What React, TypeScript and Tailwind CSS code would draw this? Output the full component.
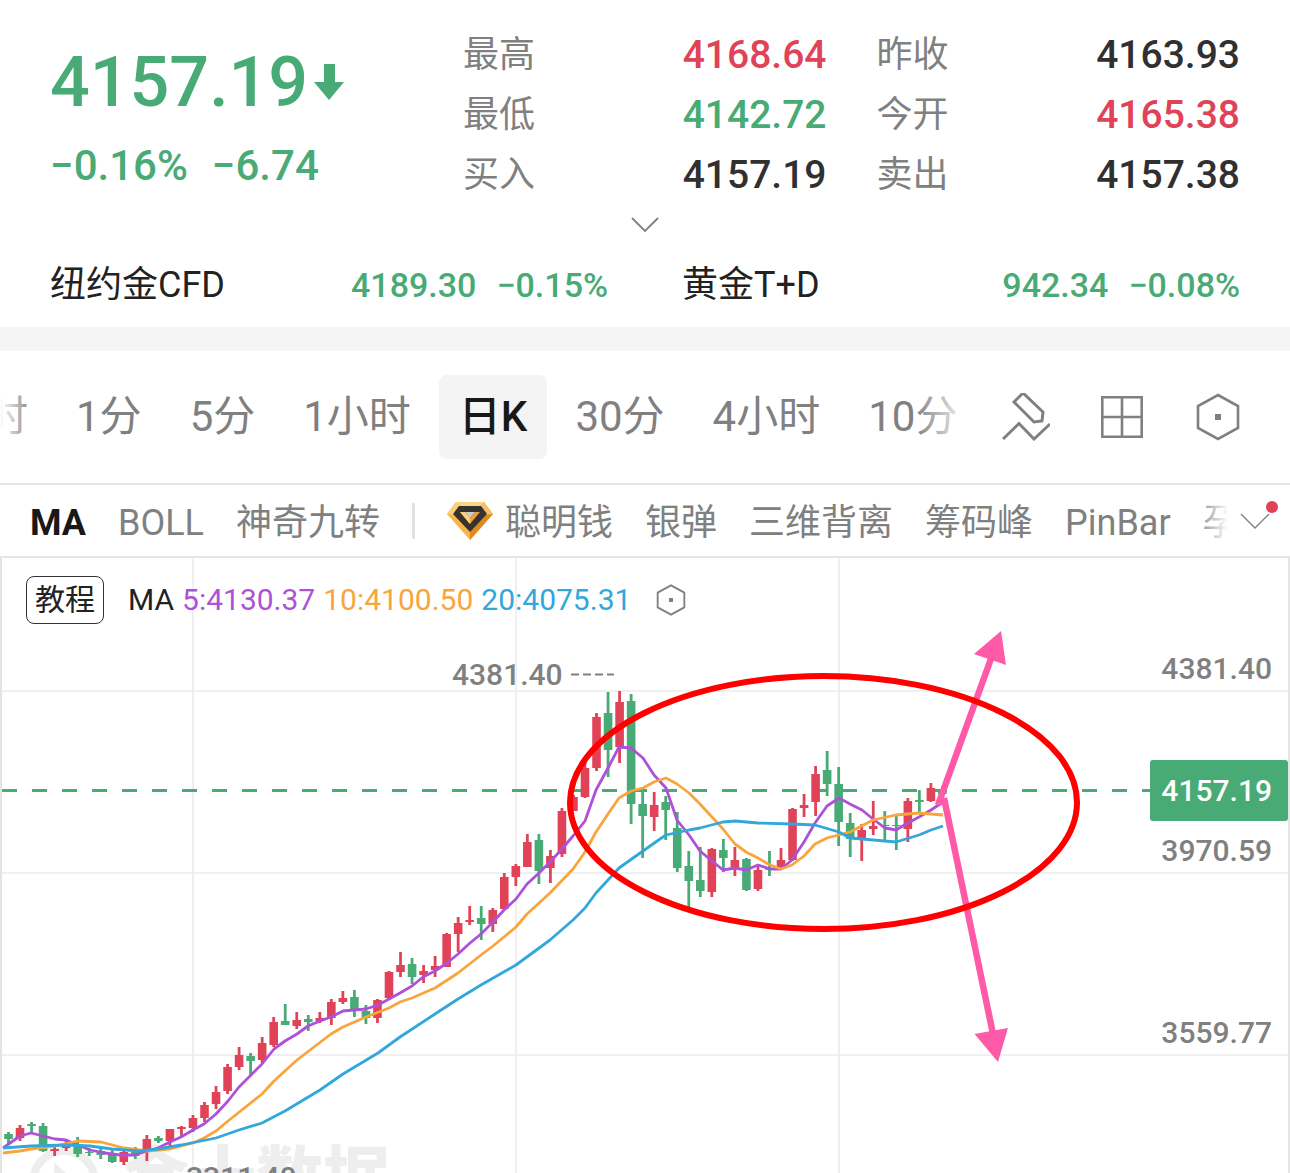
import React, { useState } from "react";
import clsx from "clsx";

type Candle = [color: "r" | "g", high: number, top: number, bottom: number, low: number];

const stats = [
  { label: "最高", value: "4168.64", color: "text-[#e04358]" },
  { label: "昨收", value: "4163.93", color: "text-[#303030]" },
  { label: "最低", value: "4142.72", color: "text-[#48aa74]" },
  { label: "今开", value: "4165.38", color: "text-[#e04358]" },
  { label: "买入", value: "4157.19", color: "text-[#303030]" },
  { label: "卖出", value: "4157.38", color: "text-[#303030]" },
];

const tickers = [
  { name: "纽约金CFD", price: "4189.30", change: "−0.15%" },
  { name: "黄金T+D", price: "942.34", change: "−0.08%" },
];

const periods = ["分时", "1分", "5分", "1小时", "日K", "30分", "4小时", "10分"];

const mainIndicators = ["MA", "BOLL", "神奇九转"];
const proIndicators = ["聪明钱", "银弹", "三维背离", "筹码峰", "PinBar", "孕线"];

const legend = [
  { text: "5:4130.37", color: "text-[#ae50d8]" },
  { text: "10:4100.50", color: "text-[#f9a53c]" },
  { text: "20:4075.31", color: "text-[#31a7dc]" },
];

const priceLabels = [
  { y: 679, text: "4381.40" },
  { y: 861, text: "3970.59" },
  { y: 1043, text: "3559.77" },
];

const candles: Candle[] = [
  ["g", 1132, 1134, 1139, 1144], ["r", 1125, 1128, 1138, 1141], ["g", 1122, 1124, 1126, 1132],
  ["g", 1123, 1126, 1151, 1152], ["r", 1147, 1149, 1151, 1156], ["r", 1141, 1145, 1148, 1151],
  ["g", 1137, 1144, 1154, 1157], ["g", 1148, 1152, 1153, 1156], ["g", 1147, 1151, 1155, 1159],
  ["g", 1150, 1155, 1162, 1163], ["r", 1151, 1152, 1162, 1165], ["g", 1147, 1152, 1156, 1159],
  ["r", 1135, 1139, 1149, 1161], ["g", 1136, 1138, 1141, 1143], ["r", 1129, 1129, 1141, 1146],
  ["r", 1126, 1127, 1129, 1136], ["r", 1115, 1118, 1128, 1132], ["r", 1102, 1105, 1118, 1122],
  ["r", 1086, 1092, 1104, 1109], ["r", 1064, 1067, 1091, 1094], ["r", 1047, 1055, 1067, 1070],
  ["g", 1053, 1056, 1061, 1075], ["r", 1037, 1043, 1060, 1063], ["r", 1017, 1022, 1045, 1047],
  ["g", 1004, 1021, 1025, 1025], ["r", 1012, 1020, 1026, 1029], ["g", 1015, 1019, 1022, 1031],
  ["r", 1012, 1018, 1021, 1023], ["r", 999, 1002, 1018, 1025], ["r", 991, 998, 1002, 1004],
  ["g", 990, 997, 1010, 1017], ["g", 1005, 1011, 1018, 1024], ["r", 999, 1000, 1018, 1023],
  ["r", 971, 972, 998, 1000], ["r", 952, 965, 972, 977], ["g", 958, 964, 977, 984],
  ["r", 965, 971, 975, 983], ["r", 956, 966, 970, 977], ["r", 933, 934, 967, 967],
  ["r", 917, 923, 934, 952], ["r", 906, 920, 922, 925], ["g", 906, 918, 924, 940],
  ["r", 908, 910, 924, 932], ["r", 873, 877, 909, 910], ["r", 864, 866, 877, 886],
  ["r", 834, 842, 867, 867], ["g", 834, 840, 871, 884], ["r", 850, 856, 868, 883],
  ["r", 808, 811, 854, 857], ["r", 795, 797, 811, 811], ["r", 760, 768, 797, 798],
  ["r", 713, 717, 768, 771], ["g", 692, 713, 750, 777], ["r", 691, 702, 747, 763],
  ["g", 694, 701, 804, 824], ["g", 792, 804, 816, 858], ["r", 792, 805, 817, 831],
  ["g", 796, 802, 810, 840], ["g", 812, 828, 868, 872], ["g", 851, 866, 881, 907],
  ["g", 847, 880, 891, 897], ["r", 848, 849, 892, 897], ["g", 839, 850, 858, 872],
  ["r", 847, 860, 868, 876], ["g", 858, 859, 890, 891], ["r", 866, 870, 889, 891],
  ["g", 851, 869, 870, 876], ["r", 848, 860, 868, 870], ["r", 808, 809, 860, 861],
  ["r", 794, 805, 808, 817], ["r", 766, 774, 802, 816], ["g", 751, 770, 784, 796],
  ["g", 767, 784, 822, 846], ["g", 813, 823, 839, 857], ["r", 824, 830, 838, 861],
  ["r", 801, 826, 829, 835], ["g", 811, 825, 826, 840], ["g", 816, 825, 826, 850],
  ["r", 798, 801, 829, 842], ["g", 790, 800, 802, 812], ["r", 783, 788, 801, 802],
  ["g", 786, 791, 794, 798],
];

const candleColors = { r: "#e04358", g: "#48aa74" };

const averages = [
  {
    color: "#ae50d8",
    points: "3,1148 20,1136 31,1133 55,1139 66,1140 78,1145 90,1150 105,1153 120,1155 135,1155 147,1151 158,1148 170,1142 181,1137 193,1130 204,1124 216,1114 228,1101 239,1087 251,1075 262,1064 274,1049 285,1041 297,1034 308,1026 320,1021 331,1017 343,1011 354,1010 366,1009 378,1005 389,999 400,993 412,986 423,977 435,971 447,963 458,954 470,943 481,934 493,922 504,910 516,899 527,884 539,873 550,862 562,849 573,836 585,821 596,790 608,768 619,747 631,748 643,758 654,775 666,788 677,820 689,835 700,851 712,861 723,870 735,868 746,870 758,865 770,869 781,869 792,860 804,842 815,823 827,806 839,798 850,804 862,810 873,819 885,828 896,830 908,823 919,817 931,810 943,802",
  },
  {
    color: "#f9a53c",
    points: "3,1153 20,1151 31,1149 55,1146 78,1141 101,1142 124,1148 147,1151 170,1149 193,1143 204,1138 216,1131 228,1121 262,1094 274,1081 297,1060 331,1034 343,1027 366,1017 389,1008 400,1002 412,998 435,988 458,973 481,955 493,946 516,927 527,914 550,893 573,869 585,852 596,832 608,814 619,798 631,791 643,788 654,782 666,778 677,784 689,793 700,804 723,829 735,844 746,852 758,858 770,865 781,869 792,865 804,856 815,844 827,838 850,832 873,820 896,815 919,813 943,815",
  },
  {
    color: "#31a7dc",
    points: "3,1148 31,1146 66,1145 90,1146 112,1149 140,1151 158,1149 181,1145 216,1138 239,1130 262,1123 285,1111 320,1090 343,1074 378,1053 400,1037 435,1014 458,999 481,985 516,965 550,940 573,920 585,908 596,893 608,880 619,868 660,839 666,835 689,830 700,828 723,822 735,821 758,823 792,824 815,825 839,832 850,838 862,839 896,842 919,835 931,830 943,826",
  },
];

const HexagonIcon: React.FC<{ className: string; strokeWidth: number }> = ({ className, strokeWidth }) => (
  <svg viewBox="0 0 48 48" className={className} fill="none" stroke="#808080" strokeWidth={strokeWidth}>
    <path d="M24 2 44 13V35L24 46 4 35V13Z" />
    <rect x="21" y="21" width="6" height="6" fill="#808080" stroke="none" />
  </svg>
);

const DrawIcon = () => (
  <svg viewBox="0 0 48 48" className="size-12" fill="none" stroke="#808080" strokeWidth="3">
    <path d="M21 0 12 9 32 29 40 28 41 19Z" />
    <path d="M1 46 17 30.500 32 46 48 31" />
  </svg>
);

const GridIcon = () => (
  <svg viewBox="0 0 48 48" className="size-12" fill="none" stroke="#808080" strokeWidth="2.6">
    <path d="M4.300 4.300H43.700V43.700H4.300ZM24 4V44M4 24H44" />
  </svg>
);

const DiamondIcon = () => (
  <svg viewBox="0 0 46 40" className="w-[46px] h-10 shrink-0">
    <path d="M9 1H37L46 13 23 39 0 13Z" fill="#f6b64a" />
    <path d="M9 1H37L33 5H13Z" fill="#fbd583" />
    <path d="M37 1 46 13 39 14 33 5Z" fill="#f4c068" />
    <path d="M46 13 23 39V30L39 14Z" fill="#e08a1c" />
    <path d="M9 1 0 13 7 14 13 5Z" fill="#fbd07a" />
    <path d="M12 5H34L40 13 23 31 6 13Z" fill="#36322f" />
    <path d="M13 11H18L23 17 28 11H33L23 23Z" fill="#f0a02c" />
    <path d="M13 11H18L23 17V23Z" fill="#fcd27b" />
    <path d="M18 11H28L23 17Z" fill="#c9cbd0" />
  </svg>
);

const QuoteHeader = () => (
  <header className="pt-[25px] px-[50px]">
    <div className="grid grid-cols-[413px_1fr]">
      <div className="text-[#48aa74] font-medium">
        <div className="flex items-center h-[114px]">
          <span className="text-[70px] leading-none">4157.19</span>
          <svg viewBox="0 0 30 36" className="ml-1.5 w-[30px] h-9" fill="#48aa74">
            <path d="M10 0H21V18H30L15 36 0 18H10Z" />
          </svg>
        </div>
        <div className="flex gap-6 text-[42px] leading-[54px]">
          <span>−0.16%</span>
          <span>−6.74</span>
        </div>
      </div>

      <dl className="grid grid-cols-2 gap-x-[50px]">
        {
          stats.map(({ label, value, color }) => (
            <div key={label} className="flex justify-between h-[60px] leading-[60px]">
              <dt className="text-4xl leading-[60px] text-[#808080]">{label}</dt>
              <dd className={clsx("text-[39px] font-medium", color)}>{value}</dd>
            </div>
          ))
        }
      </dl>
    </div>

    <button type="button" aria-label="展开行情" className="flex items-center justify-center mx-auto h-10 px-4">
      <svg viewBox="0 0 28 16" className="w-7 h-4" fill="none" stroke="#808080" strokeWidth="1.8">
        <path d="M1 1 14 14 27 1" />
      </svg>
    </button>

    <div className="grid grid-cols-2 gap-x-[74px] h-[82px] leading-[80px]">
      {
        tickers.map(({ name, price, change }) => (
          <a key={name} href="#" className="flex justify-between">
            <span className="text-4xl leading-[80px] text-[#222]">{name}</span>
            <span className="flex gap-5 text-[34px] font-medium text-[#48aa74]">
              <span>{price}</span>
              <span>{change}</span>
            </span>
          </a>
        ))
      }
    </div>
  </header>
);

const PeriodBar = () => {
  const [activePeriod, setActivePeriod] = useState("日K");

  return (
    <div className="flex items-center h-[134px] pr-12 border-b-2 border-[#e6e6e6]">
      <div className="relative flex-1 min-w-0 overflow-hidden">
        <nav className="flex gap-2 -ml-[76px]">
          {
            periods.map(period => (
              <button
                key={period}
                type="button"
                onClick={() => setActivePeriod(period)}
                className={clsx(
                  "shrink-0 h-[84px] px-5 rounded-lg text-[42px] leading-none whitespace-nowrap",
                  period === activePeriod ? "bg-[#f4f4f4] font-medium text-[#181818]" : "text-[#808080]"
                )}
              >
                {period}
              </button>
            ))
          }
        </nav>
        <div className="absolute inset-y-0 left-0 w-8 bg-linear-to-r from-white to-transparent pointer-events-none" />
        <div className="absolute inset-y-0 right-0 w-14 bg-linear-to-l from-white to-transparent pointer-events-none" />
      </div>

      <div className="flex gap-12 pl-8">
        <button type="button" aria-label="画线"><DrawIcon /></button>
        <button type="button" aria-label="多图"><GridIcon /></button>
        <button type="button" aria-label="设置"><HexagonIcon className="size-12" strokeWidth={2.6} /></button>
      </div>
    </div>
  );
};

const IndicatorBar = () => {
  const [activeIndicator, setActiveIndicator] = useState("MA");

  const renderTab = (name: string) => (
    <button
      key={name}
      type="button"
      onClick={() => setActiveIndicator(name)}
      className={clsx(
        "shrink-0 pt-1 text-4xl whitespace-nowrap",
        name === activeIndicator ? "font-bold text-[#181818]" : "text-[#808080]"
      )}
    >
      {name}
    </button>
  );

  return (
    <div className="flex items-center h-[73px] pl-[30px] pr-5 border-b-2 border-[#e6e6e6]">
      <div className="relative flex-1 min-w-0 overflow-hidden">
        <nav className="flex items-center gap-8">
          {mainIndicators.map(renderTab)}
          <span className="w-[3px] h-9 shrink-0 bg-[#e2e2e2]" />
          <span className="flex items-center gap-3 shrink-0">
            <DiamondIcon />
            {renderTab(proIndicators[0])}
          </span>
          {proIndicators.slice(1).map(renderTab)}
        </nav>
        <div className="absolute inset-y-0 right-0 w-8 bg-linear-to-l from-white to-transparent pointer-events-none" />
      </div>
      <button type="button" aria-label="更多指标" className="relative pl-3">
        <svg viewBox="0 0 30 16" className="w-[30px] h-4" fill="none" stroke="#808080" strokeWidth="1.4">
          <path d="M1 1 15 15 29 1" />
        </svg>
        <span className="absolute -top-3 -right-2 size-3 rounded-full bg-[#e04358]" />
      </button>
    </div>
  );
};

const Chart = () => (
  <section className="relative">
    <div className="absolute top-[18px] left-[26px] flex items-center text-[30px] leading-none">
      <button type="button" className="h-12 px-2 border border-[#333] rounded-lg text-[#222]">教程</button>
      <span className="ml-6 text-[#222]">MA</span>
      <span className="flex gap-2 ml-2">
        {legend.map(({ text, color }) => <span key={text} className={color}>{text}</span>)}
      </span>
      <button type="button" aria-label="指标设置" className="ml-6">
        <HexagonIcon className="size-8" strokeWidth={2.8} />
      </button>
    </div>

    {/* y starts at 558 so that candle values can be used as they are */}
    <svg viewBox="0 558 1290 615" className="block w-full h-auto">
      <g stroke="#ececec" strokeWidth="1.600">
        <path d="M193 558V1173M516 558V1173M839 558V1173M2 691H1288M2 873H1288M2 1055H1288" />
        <path d="M1 558V1173M1289 558V1173" stroke="#e4e4e4" strokeWidth="2" />
      </g>

      <g fill="#eeeeee">
        <circle cx="64" cy="1182" r="31" fill="none" stroke="#eeeeee" strokeWidth="8" />
        <path d="M54 1162 76 1182 54 1182Z" />
        <text x="122" y="1202" fontSize="67" fontWeight="900">金十数据</text>
      </g>

      <path d="M2 790.500H1150" stroke="#48aa74" strokeWidth="3" strokeDasharray="15 15" />

      {
        candles.map(([color, high, top, bottom, low], i) => {
          const x = 8.5 + i * 11.53;

          return (
            <g key={i} fill={candleColors[color]}>
              <rect x={x - 1.4} y={high} width="2.8" height={low - high} />
              <rect x={x - 4.3} y={top} width="8.600" height={bottom - top} />
            </g>
          );
        })
      }

      <g fill="none" strokeWidth="2.800" strokeLinejoin="round">
        {averages.map(({ color, points }) => <polyline key={color} points={points} stroke={color} />)}
      </g>

      <g fill="#808080" fontSize="30" fontWeight="500">
        <text x="452" y="685">4381.40</text>
        <path d="M571 674.500H614" stroke="#808080" strokeWidth="2" strokeDasharray="8 4" />
        <text x="186" y="1188">3311.40</text>
        {priceLabels.map(({ y, text }) => <text key={text} x="1272" y={y} textAnchor="end">{text}</text>)}
        <rect x="1150" y="760" width="138" height="61" rx="3" fill="#48aa74" />
        <text x="1272" y="801" textAnchor="end" fill="#fff">4157.19</text>
      </g>

      <g stroke="#ff5aa8" strokeWidth="6.500" fill="#ff5aa8">
        <path d="M938 805 992 656M944 798 993 1034" />
        <path d="M1001 631 974 654 1006 665ZM998 1062 974.500 1034 1008 1028Z" stroke="none" />
      </g>
      <ellipse cx="823.500" cy="802.500" rx="253.500" ry="126.500" fill="none" stroke="#f00" strokeWidth="6" />
    </svg>
  </section>
);

const App: React.FC = () => (
  <main className="bg-white font-[Roboto,'Noto_Sans_CJK_SC',sans-serif]">
    <QuoteHeader />
    <div className="h-6 bg-[#f5f5f5]" />
    <PeriodBar />
    <IndicatorBar />
    <Chart />
  </main>
);

export default App;
